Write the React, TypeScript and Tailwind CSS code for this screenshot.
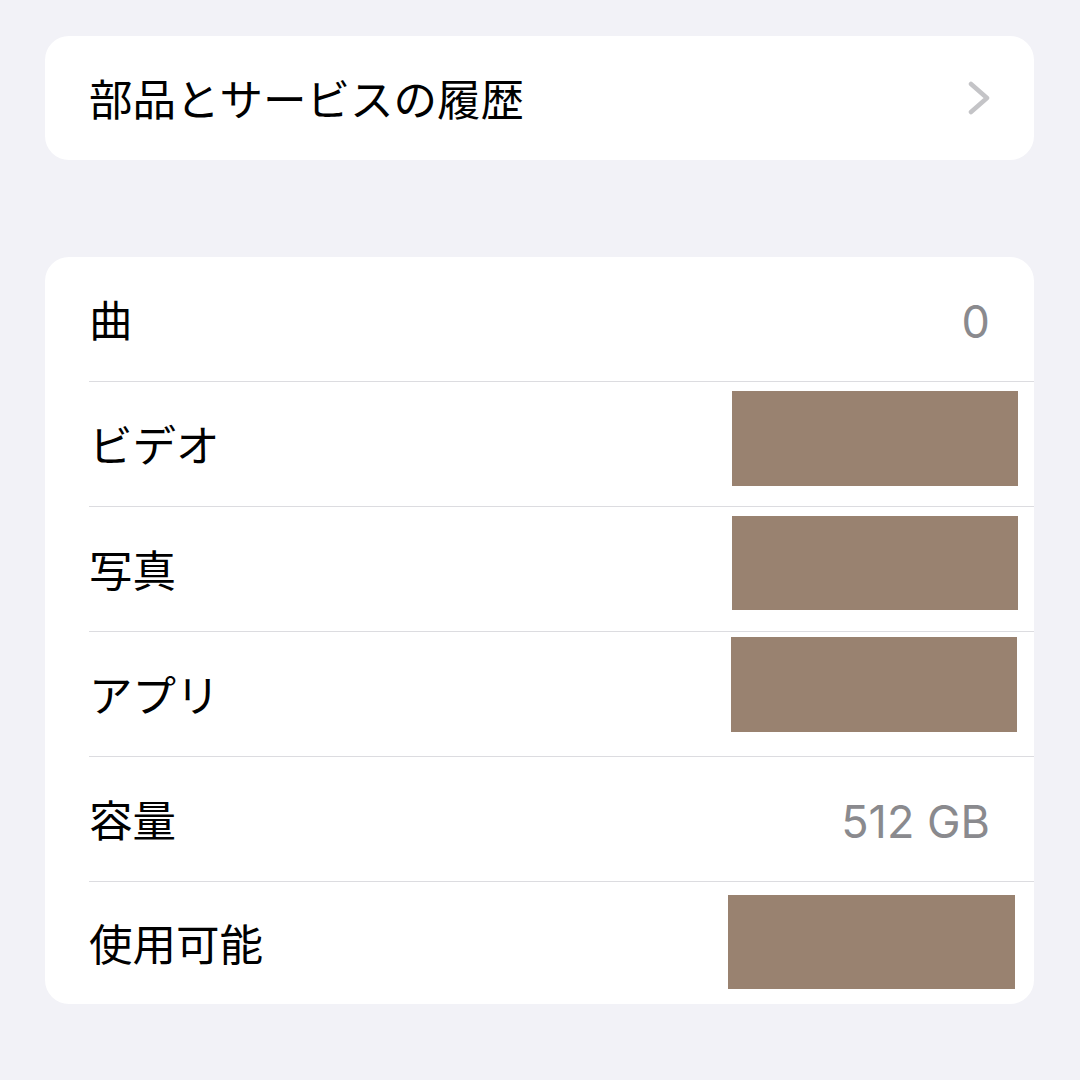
import React from "react";

const font = { fontFamily: 'Inter, "Noto Sans CJK JP", sans-serif' };

type Row = { label: string; value?: string; box?: string };

const rows: Row[] = [
  { label: "曲", value: "0" },
  { label: "ビデオ", box: "top-[9px] right-[16px] w-[286px] h-[95px]" },
  { label: "写真", box: "top-[9px] right-[16px] w-[286px] h-[94px]" },
  { label: "アプリ", box: "top-[5px] right-[17px] w-[286px] h-[95px]" },
  { label: "容量", value: "512 GB" },
  { label: "使用可能", box: "top-[13px] right-[19px] w-[287px] h-[94px]" },
];

export default function App() {
  return (
    <div
      className="w-[1080px] h-[1080px] bg-[#f2f2f7] pt-[36px] pl-[45px] pr-[46px] antialiased"
      style={font}
    >
      <div className="h-[124px] rounded-[24px] bg-white flex items-center justify-between pl-[44px] pr-[44px]">
        <span className="pt-[6px] text-[43.5px] leading-none text-black">部品とサービスの履歴</span>
        <svg width="22" height="34" viewBox="0 0 22 34" fill="none">
          <path
            d="M3 3 L19 17 L3 31"
            stroke="#c4c4c7"
            strokeWidth="4.5"
            strokeLinecap="round"
            strokeLinejoin="round"
          />
        </svg>
      </div>

      <div className="mt-[97px] rounded-[24px] bg-white overflow-hidden">
        {rows.map((r, i) => (
          <div
            key={r.label}
            className={
              i < rows.length - 1
                ? "relative ml-[44px] h-[125px] border-b border-[#dcdce0] flex items-center justify-between pr-[44px]"
                : "relative ml-[44px] h-[122px] flex items-center justify-between pr-[44px]"
            }
          >
            <span className="pt-[6px] text-[43.5px] leading-none text-black">{r.label}</span>
            {r.value && (
              <span className="pt-[4px] text-[45px] leading-none text-[#8a8a8e]">{r.value}</span>
            )}
            {r.box && <div className={"absolute bg-[#998270] " + r.box} />}
          </div>
        ))}
      </div>
    </div>
  );
}
